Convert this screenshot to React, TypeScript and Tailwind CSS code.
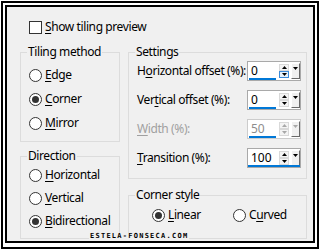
import React from "react";

const UI = "font-['Noto_Sans',sans-serif] text-[12px] leading-[16px] tracking-[-0.4px] text-black";

function L({ pre = "", u, post = "" }: { pre?: string; u: string; post?: string }) {
  return (
    <span className="whitespace-nowrap">
      {pre}
      <span className="underline underline-offset-[2px]">{u}</span>
      {post}
    </span>
  );
}

function Radio({ checked, children }: { checked?: boolean; children: React.ReactNode }) {
  return (
    <div className="flex items-center h-[16px]">
      <span className="w-[13px] h-[13px] shrink-0 rounded-full border border-[#333333] bg-white flex items-center justify-center">
        {checked && <span className="w-[7px] h-[7px] rounded-full bg-[#333333]" />}
      </span>
      <span className="ml-[3px]">{children}</span>
    </div>
  );
}

function Up({ c = "#000" }: { c?: string }) {
  return (
    <svg width="5" height="3" viewBox="0 0 5 3">
      <path d="M0 3 L2.5 0 L5 3 Z" fill={c} />
    </svg>
  );
}
function Down({ c = "#000" }: { c?: string }) {
  return (
    <svg width="5" height="3" viewBox="0 0 5 3">
      <path d="M0 0 L5 0 L2.5 3 Z" fill={c} />
    </svg>
  );
}

function Spin({
  value,
  disabled,
  hover,
  full,
}: {
  value: string;
  disabled?: boolean;
  hover?: boolean;
  full?: boolean;
}) {
  const ac = disabled ? "#a8a8a8" : "#000";
  return (
    <div
      className={`relative w-[54px] h-[20px] shrink-0 border bg-white flex tracking-normal ${
        disabled ? "border-[#cccccc]" : "border-[#a9a9a9]"
      }`}
    >
      <div className="ml-px w-[27px] h-full relative">
        <span className={`absolute left-[2px] top-[1px] ${disabled ? "text-[#8d8d8d]" : "text-black"}`}>{value}</span>
        {!full && <span className="absolute left-0 right-0 bottom-0 h-[2px] bg-[#0078d7]" />}
      </div>
      <div className="ml-[3px] mt-[2px] w-[10px] h-[14px] flex flex-col">
        <div className="h-[7px] flex items-center justify-center bg-[#f4f4f4] border border-[#d9d9d9]">
          <Up c={ac} />
        </div>
        <div
          className={`h-[7px] flex items-center justify-center border ${
            hover ? "border-[#3c8ad8] bg-[#e5f1fb]" : "border-[#d9d9d9] bg-[#f4f4f4]"
          }`}
        >
          <Down c={ac} />
        </div>
      </div>
      <div className="ml-[2px] mt-[1px] w-[9px] h-[16px] bg-[#f0f0f0] border-t border-l border-t-white border-l-white border-r border-b border-r-[#696969] border-b-[#696969] flex justify-center pt-[3px]">
        <Down c={ac} />
      </div>
      {full && <span className="absolute left-0 right-0 bottom-0 h-[2px] bg-[#0078d7]" />}
    </div>
  );
}

function Group({
  title,
  className,
  children,
}: {
  title: string;
  className: string;
  children: React.ReactNode;
}) {
  return (
    <fieldset className={`border border-[#dcdcdc] pl-[8px] ${className}`}>
      <legend className="ml-[-2px] px-[1px]">{title}</legend>
      {children}
    </fieldset>
  );
}

export default function App() {
  return (
    <div className={`relative w-[320px] h-[250px] bg-white p-px ${UI}`}>
      <div className="w-full h-full border-2 border-black bg-white pt-[2px] pl-[2px] pr-[2px] pb-[4px]">
        <div className="w-full h-full border-2 border-black bg-[#f0f0f0] pt-[12px] pl-[13px]">
          <div className="flex items-center h-[16px] ml-[9px]">
            <span className="w-[13px] h-[13px] border border-[#333333] bg-white" />
            <span className="ml-[3px]">
              <L u="S" post="how tiling preview" />
            </span>
          </div>
          <div className="flex mt-[9px] gap-[8px]">
            <div className="w-[100px] flex flex-col">
              <Group title="Tiling method" className="h-[98px]">
                <div className="flex flex-col gap-[8px] pt-[7px]">
                  <Radio>
                    <L u="E" post="dge" />
                  </Radio>
                  <Radio checked>
                    <L u="C" post="orner" />
                  </Radio>
                  <Radio>
                    <L u="M" post="irror" />
                  </Radio>
                </div>
              </Group>
              <Group title="Direction" className="h-[91px] mt-[6px]">
                <div className="flex flex-col gap-[7px] pt-[3px]">
                  <Radio>
                    <L u="H" post="orizontal" />
                  </Radio>
                  <Radio>
                    <L u="V" post="ertical" />
                  </Radio>
                  <Radio checked>
                    <L u="B" post="idirectional" />
                  </Radio>
                </div>
              </Group>
            </div>
            <div className="w-[179px] flex flex-col">
              <Group title="Settings" className="h-[135px] pr-[5px]">
                <div className="flex flex-col gap-[9px] pt-[1px]">
                  <div className="flex items-center justify-between h-[20px]">
                    <L pre="H" u="o" post="rizontal offset (%):" />
                    <Spin value="0" hover />
                  </div>
                  <div className="flex items-center justify-between h-[20px]">
                    <L pre="Ver" u="t" post="ical offset (%):" />
                    <Spin value="0" />
                  </div>
                  <div className="flex items-center justify-between h-[20px] text-[#a0a0a0]">
                    <L u="W" post="idth (%):" />
                    <Spin value="50" disabled />
                  </div>
                  <div className="flex items-center justify-between h-[20px]">
                    <L u="T" post="ransition (%):" />
                    <Spin value="100" full />
                  </div>
                </div>
              </Group>
              <Group title="Corner style" className="h-[52px] mt-[8px]">
                <div className="flex pt-[4px] pl-[15px]">
                  <div className="w-[81px]">
                    <Radio checked>
                      <L u="L" post="inear" />
                    </Radio>
                  </div>
                  <Radio>
                    <L pre="C" u="u" post="rved" />
                  </Radio>
                </div>
              </Group>
            </div>
          </div>
        </div>
      </div>
      <div className="absolute left-[89px] top-[233px] px-px bg-[#f0f0f0] font-['DejaVu_Sans_Mono',monospace] font-bold text-[7px] leading-[7px] tracking-[1.25px]">
        ESTELA-FONSECA.COM
      </div>
    </div>
  );
}
